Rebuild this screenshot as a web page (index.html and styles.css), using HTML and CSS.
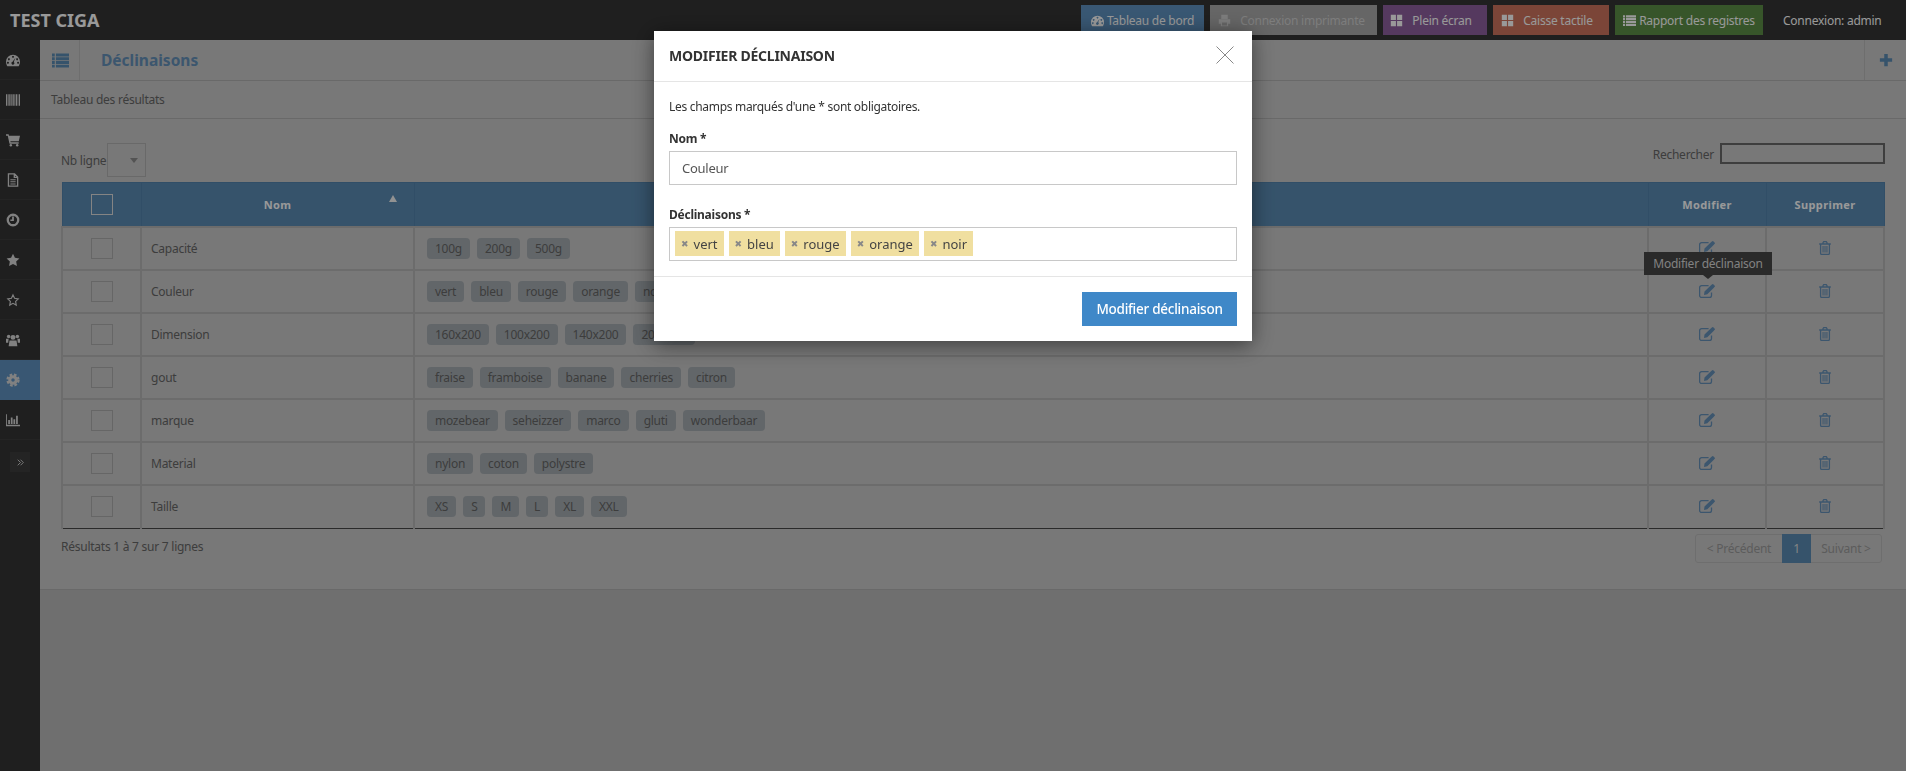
FILE: index.html
```html
<!DOCTYPE html>
<html>
  <head>
    <meta http-equiv="Content-type" content="text/html; charset=utf-8">
    <title>Déclinaisons</title>
    <link rel="stylesheet" href="styles.css">
  </head>
  <body>
    <svg class="defs" width="0" height="0">
      <symbol id="i-dash" viewBox="0 0 16 16"><path fill-rule="evenodd" d="M0 10a8 8 0 0 1 16 0c0 2-.6 3.500-1.500 5h-13C.6 13.500 0 12 0 10zM3.300 6a1.100 1.100 0 1 0 .01 0zM8 3.300a1.100 1.100 0 1 0 .01 0zM12.700 6a1.100 1.100 0 1 0 .01 0zM2.200 10a1.100 1.100 0 1 0 .01 0zM13.800 10a1.100 1.100 0 1 0 .01 0zM10.800 5.500L8.900 10.300a1.700 1.700 0 1 1-1.400-.3z"/></symbol>
      <symbol id="i-barcode" viewBox="0 0 16 16"><path d="M0 1.500h1.500v13H0zM2.200 1.500h.8v13h-.8zM3.700 1.500h1.500v13H3.700zM5.900 1.500h.8v13h-.8zM7.400 1.500h1.500v13H7.400zM9.600 1.500h.8v13h-.8zM11.100 1.500h1.500v13h-1.500zM13.300 1.500h.8v13h-.8zM14.800 1.500H16v13h-1.200z"/></symbol>
      <symbol id="i-cart" viewBox="0 0 16 16"><path d="M0 1.500h3l.4 1.500H16l-1.400 6.500H5l.3 1.200h9.200v1.500H4L2 3H0z"/><circle cx="5.500" cy="14" r="1.400"/><circle cx="12.800" cy="14" r="1.400"/></symbol>
      <symbol id="i-file" viewBox="0 0 16 16"><path fill="none" stroke="currentColor" stroke-width="1.500" d="M2.800 1h7l3.500 3.500V15H2.800zM9.500 1v4h4"/><path d="M5 7h6v1.200H5zM5 9.500h6v1.200H5zM5 12h6v1.200H5z"/></symbol>
      <symbol id="i-clock" viewBox="0 0 16 16"><circle cx="8" cy="8" r="6" fill="none" stroke="currentColor" stroke-width="2.600"/><path d="M7 4h2v5H5V7.500h2z"/></symbol>
      <symbol id="i-star" viewBox="0 0 16 16"><path d="M8 .8l2.200 4.700 5.100.7-3.700 3.600.9 5.100L8 12.500l-4.500 2.400.9-5.100L.7 6.200l5.100-.7z"/></symbol>
      <symbol id="i-star-o" viewBox="0 0 16 16"><path fill="none" stroke="currentColor" stroke-width="1.300" d="M8 2.200l1.800 3.900 4.200.6-3 2.900.7 4.200L8 11.800l-3.700 2 .7-4.200-3-2.900 4.200-.6z"/></symbol>
      <symbol id="i-users" viewBox="0 0 16 16"><circle cx="8" cy="5" r="2.800"/><circle cx="3" cy="4" r="2"/><circle cx="13" cy="4" r="2"/><path d="M4 8.500h8l1 6.500H3zM0 6.500h3L2.500 11H0zM13 6.500h3V11h-2.500z"/></symbol>
      <symbol id="i-cog" viewBox="0 0 16 16"><circle cx="8" cy="8" r="6.300" fill="none" stroke="currentColor" stroke-width="2.600" stroke-dasharray="3 2"/><path fill-rule="evenodd" d="M8 2.500a5.500 5.500 0 1 1 0 11 5.500 5.500 0 0 1 0-11zM8 6a2 2 0 1 0 0 4 2 2 0 0 0 0-4z"/></symbol>
      <symbol id="i-chart" viewBox="0 0 16 16"><path d="M0 1.500h1v12h15V15H0zM2.500 8h2v4.500h-2zM5.500 5h2v7.500h-2zM8.500 7h2v5.500h-2zM11.500 3h2v9.500h-2z"/></symbol>
      <symbol id="i-angles" viewBox="0 0 16 16"><path fill="none" stroke="currentColor" stroke-width="1.600" d="M3 3l5 5-5 5M8 3l5 5-5 5"/></symbol>
      <symbol id="i-list" viewBox="0 0 16 16"><path d="M0 1.500h2.600v2.700H0zM3.700 1.500H16v2.700H3.700zM0 5h2.600v2.700H0zM3.700 5H16v2.700H3.700zM0 8.500h2.600v2.700H0zM3.700 8.500H16v2.700H3.700zM0 12h2.600v2.700H0zM3.700 12H16v2.700H3.700z"/></symbol>
      <symbol id="i-large" viewBox="0 0 16 16"><path d="M1 1h6.300v6.300H1zM8.700 1H15v6.300H8.700zM1 8.700h6.300V15H1zM8.700 8.700H15V15H8.700z"/></symbol>
      <symbol id="i-print" viewBox="0 0 16 16"><path fill-rule="evenodd" d="M4 1h8v5H4zM1 6.500h14V12h-2.500v3h-9v-3H1zM5 10.500V14h6v-3.500z"/></symbol>
      <symbol id="i-plus" viewBox="0 0 16 16"><path d="M6 1h4v5h5v4h-5v5H6v-5H1V6h5z"/></symbol>
      <symbol id="i-edit" viewBox="0 0 16 14"><path fill="none" stroke="currentColor" stroke-width="1.300" d="M12.500 8.500v3a2 2 0 0 1-2 2H2.600a2 2 0 0 1-2-2V3.700a2 2 0 0 1 2-2h7"/><path d="M5.500 7.500L12.500.8l2.600 2.600-6.800 6.900-3.300.6zM13.200.2l.8-.2 2 2-.2.800-.9.800-2.500-2.600z"/></symbol>
      <symbol id="i-trash" viewBox="0 0 12 14"><path fill="none" stroke="currentColor" stroke-width="1.300" d="M.2 3h11.600M4 3V1.700L4.700.7h2.600l.7 1V3M1.600 3v9.300c0 .7.500 1.200 1.100 1.200h6.600c.6 0 1.100-.5 1.100-1.200V3"/><path d="M3.500 5h1.100v6.500H3.500zM5.450 5h1.100v6.500H5.450zM7.400 5h1.100v6.500H7.400z"/></symbol>
    </svg>

    <div class="topbar">
      <div class="brand">TEST CIGA</div>
      <div class="top_btns">
        <a class="top_btn btn_blue"><svg class="ico"><use href="#i-dash"/></svg>Tableau de bord</a>
        <a class="top_btn btn_grey"><svg class="ico"><use href="#i-print"/></svg>Connexion imprimante</a>
        <a class="top_btn btn_purple"><svg class="ico"><use href="#i-large"/></svg>Plein écran</a>
        <a class="top_btn btn_red"><svg class="ico"><use href="#i-large"/></svg>Caisse tactile</a>
        <a class="top_btn btn_green"><svg class="ico"><use href="#i-list"/></svg>Rapport des registres</a>
        <span class="login">Connexion: admin</span>
      </div>
    </div>

    <div class="layout">
      <div class="sidebar">
        <a class="side_item"><svg class="ico"><use href="#i-dash"/></svg></a>
        <a class="side_item"><svg class="ico"><use href="#i-barcode"/></svg></a>
        <a class="side_item"><svg class="ico"><use href="#i-cart"/></svg></a>
        <a class="side_item"><svg class="ico"><use href="#i-file"/></svg></a>
        <a class="side_item"><svg class="ico"><use href="#i-clock"/></svg></a>
        <a class="side_item"><svg class="ico"><use href="#i-star"/></svg></a>
        <a class="side_item"><svg class="ico"><use href="#i-star-o"/></svg></a>
        <a class="side_item"><svg class="ico"><use href="#i-users"/></svg></a>
        <a class="side_item active"><svg class="ico"><use href="#i-cog"/></svg></a>
        <a class="side_item"><svg class="ico"><use href="#i-chart"/></svg></a>
        <a class="side_toggle"><svg class="ico_small"><use href="#i-angles"/></svg></a>
      </div>

      <div class="main">
        <div class="page_head">
          <div class="head_icon"><svg class="ico_list"><use href="#i-list"/></svg></div>
          <h1 class="page_title">Déclinaisons</h1>
          <div class="head_add"><svg class="ico_plus"><use href="#i-plus"/></svg></div>
        </div>
        <div class="sub_head">Tableau des résultats</div>

        <div class="panel">
          <div class="controls">
            <div class="nb_line">Nb ligne <span class="fake_select"><i class="caret"></i></span></div>
            <div class="search">Rechercher <span class="search_box"></span></div>
          </div>

          <table class="grid">
            <colgroup>
              <col class="c_check"><col class="c_name"><col class="c_vals"><col class="c_edit"><col class="c_del">
            </colgroup>
            <thead>
              <tr>
                <th><span class="check"></span></th>
                <th class="sorted">Nom<i class="sort_up"></i></th>
                <th></th>
                <th>Modifier</th>
                <th>Supprimer</th>
              </tr>
            </thead>
            <tbody>
              <tr>
                <td class="mid"><span class="check"></span></td>
                <td>Capacité</td>
                <td><div class="chips"><span class="chip">100g</span><span class="chip">200g</span><span class="chip">500g</span></div></td>
                <td class="mid"><svg class="ico_edit"><use href="#i-edit"/></svg></td>
                <td class="mid"><svg class="ico_trash"><use href="#i-trash"/></svg></td>
              </tr>
              <tr>
                <td class="mid"><span class="check"></span></td>
                <td>Couleur</td>
                <td><div class="chips"><span class="chip">vert</span><span class="chip">bleu</span><span class="chip">rouge</span><span class="chip">orange</span><span class="chip">noir</span></div></td>
                <td class="mid tip_cell"><svg class="ico_edit"><use href="#i-edit"/></svg><div class="tooltip">Modifier déclinaison</div></td>
                <td class="mid"><svg class="ico_trash"><use href="#i-trash"/></svg></td>
              </tr>
              <tr>
                <td class="mid"><span class="check"></span></td>
                <td>Dimension</td>
                <td><div class="chips"><span class="chip">160x200</span><span class="chip">100x200</span><span class="chip">140x200</span><span class="chip">200x200</span></div></td>
                <td class="mid"><svg class="ico_edit"><use href="#i-edit"/></svg></td>
                <td class="mid"><svg class="ico_trash"><use href="#i-trash"/></svg></td>
              </tr>
              <tr>
                <td class="mid"><span class="check"></span></td>
                <td>gout</td>
                <td><div class="chips"><span class="chip">fraise</span><span class="chip">framboise</span><span class="chip">banane</span><span class="chip">cherries</span><span class="chip">citron</span></div></td>
                <td class="mid"><svg class="ico_edit"><use href="#i-edit"/></svg></td>
                <td class="mid"><svg class="ico_trash"><use href="#i-trash"/></svg></td>
              </tr>
              <tr>
                <td class="mid"><span class="check"></span></td>
                <td>marque</td>
                <td><div class="chips"><span class="chip">mozebear</span><span class="chip">seheizzer</span><span class="chip">marco</span><span class="chip">gluti</span><span class="chip">wonderbaar</span></div></td>
                <td class="mid"><svg class="ico_edit"><use href="#i-edit"/></svg></td>
                <td class="mid"><svg class="ico_trash"><use href="#i-trash"/></svg></td>
              </tr>
              <tr>
                <td class="mid"><span class="check"></span></td>
                <td>Material</td>
                <td><div class="chips"><span class="chip">nylon</span><span class="chip">coton</span><span class="chip">polystre</span></div></td>
                <td class="mid"><svg class="ico_edit"><use href="#i-edit"/></svg></td>
                <td class="mid"><svg class="ico_trash"><use href="#i-trash"/></svg></td>
              </tr>
              <tr>
                <td class="mid"><span class="check"></span></td>
                <td>Taille</td>
                <td><div class="chips"><span class="chip">XS</span><span class="chip">S</span><span class="chip">M</span><span class="chip">L</span><span class="chip">XL</span><span class="chip">XXL</span></div></td>
                <td class="mid"><svg class="ico_edit"><use href="#i-edit"/></svg></td>
                <td class="mid"><svg class="ico_trash"><use href="#i-trash"/></svg></td>
              </tr>
            </tbody>
          </table>

          <div class="table_foot">
            <div class="result_info">Résultats 1 à 7 sur 7 lignes</div>
            <div class="pager">
              <a class="pager_prev">&lt; Précédent</a>
              <a class="pager_num">1</a>
              <a class="pager_next">Suivant &gt;</a>
            </div>
          </div>
        </div>
      </div>
    </div>

    <div class="backdrop"></div>

    <div class="modal">
      <div class="modal_head">
        <h2 class="modal_title">Modifier déclinaison</h2>
        <svg class="modal_close" viewBox="0 0 18 18"><path d="M.5.5l17 17M17.500.5l-17 17"/></svg>
      </div>
      <div class="modal_body">
        <p class="modal_note">Les champs marqués d'une * sont obligatoires.</p>
        <label class="field_label">Nom *</label>
        <div class="field_input">Couleur</div>
        <label class="field_label field_second">Déclinaisons *</label>
        <div class="field_tags">
          <span class="tag"><b>✖</b>vert</span>
          <span class="tag"><b>✖</b>bleu</span>
          <span class="tag"><b>✖</b>rouge</span>
          <span class="tag"><b>✖</b>orange</span>
          <span class="tag"><b>✖</b>noir</span>
        </div>
      </div>
      <div class="modal_foot">
        <a class="modal_btn">Modifier déclinaison</a>
      </div>
    </div>
  </body>
</html>
```

FILE: styles.css
```css
html, body { height: 100%; margin: 0; }
body { background: #b9b9b9; color: #666; font: 12px "Noto Sans", "Open Sans", sans-serif; letter-spacing: -.25px; overflow: hidden; }
.defs { position: absolute; }
svg { fill: currentColor; }

/* top bar */
.topbar { display: flex; justify-content: space-between; align-items: center; height: 40px; padding-left: 10px; background: #343434; color: #fff; }
.brand { font-size: 18px; font-weight: 700; letter-spacing: 0; }
.top_btns { display: flex; align-items: center; gap: 6px; }
.top_btn { display: flex; justify-content: center; align-items: center; gap: 3px; height: 30px; color: #fff; font-size: 12px; }
.top_btn .ico { width: 13px; height: 13px; }
.btn_blue { width: 123px; background: #5f92c0; }
.btn_grey { width: 167px; padding-right: 4px; box-sizing: border-box; background: #aaa; color: #d0d0d0; }
.btn_grey .ico { margin-right: 6px; }
.btn_purple { width: 104px; padding-right: 8px; box-sizing: border-box; background: #8e5f9e; }
.btn_purple .ico, .btn_red .ico { margin-right: 6px; }
.btn_red { width: 116px; padding-right: 8px; box-sizing: border-box; background: #cd745e; }
.btn_green { width: 148px; background: #5c8e46; }
.login { width: 137px; padding-left: 14px; box-sizing: border-box; color: #fff; white-space: nowrap; }

/* left menu */
.layout { display: flex; height: calc(100% - 40px); }
.sidebar { flex: 0 0 40px; background: #343434; color: #d8d8d8; }
.side_item { display: flex; align-items: center; height: 39px; padding-left: 6px; border-bottom: 1px solid #3c3c3c; }
.side_item.active { background: #5f92c0; border-bottom-color: #5f92c0; }
.side_item .ico { width: 14px; height: 14px; }
.side_toggle { display: flex; justify-content: center; align-items: center; width: 20px; height: 20px; margin: 12px 0 0 10px; background: #3c3c3c; }
.ico_small { width: 9px; height: 9px; }

/* content */
.main { flex: 1; min-width: 0; }
.page_head { display: flex; align-items: center; box-sizing: border-box; height: 41px; border-bottom: 1px solid #b0b0b0; background: #c8c8c8; }
.head_icon { display: flex; align-items: center; width: 40px; height: 100%; padding-left: 12px; box-sizing: border-box; border-right: 1px solid #b8b8b8; color: #5a8bb3; }
.ico_list { width: 17px; height: 17px; }
.page_title { flex: 1; margin: 0 0 0 21px; color: #6490b8; font-size: 15.5px; font-weight: 700; letter-spacing: 0; }
.head_add { display: flex; justify-content: center; align-items: center; width: 41px; height: 100%; border-left: 1px solid #b8b8b8; color: #5a8bb3; }
.ico_plus { width: 14px; height: 14px; }
.sub_head { height: 38px; padding-left: 11px; line-height: 37px; box-sizing: border-box; background: #c8c8c8; border-bottom: 1px solid #b0b0b0; }

.panel { padding: 24px 21px 26px 21px; background: #c8c8c8; border-bottom: 1px solid #b0b0b0; }
.controls { display: flex; justify-content: space-between; height: 34px; margin-bottom: 5px; }
.nb_line { display: flex; align-items: center; gap: 1px; }
.fake_select { display: flex; justify-content: flex-end; align-items: center; width: 39px; height: 34px; padding-right: 7px; box-sizing: border-box; border: 1px solid #b0b0b0; }
.caret { border: 4px solid transparent; border-top: 5px solid #8a8a8a; border-bottom: 0; }
.search { display: flex; align-items: flex-start; gap: 6px; line-height: 23px; }
.search_box { width: 165px; height: 21px; box-sizing: border-box; border: 2px solid #686868; }

/* table */
.grid { width: 100%; table-layout: fixed; border-collapse: collapse; border-bottom: 1px solid #464646; }
.c_check { width: 79px; }
.c_name { width: 273px; }
.c_edit { width: 118px; }
.c_del { width: 118px; }
.grid th { height: 43px; padding: 0; background: #5a8bb3; border: 1px solid #5283ac; color: #fff; font-size: 11px; letter-spacing: .4px; }
.grid th.sorted { position: relative; }
.sort_up { position: absolute; top: 12px; right: 17px; border: 4px solid transparent; border-bottom: 7px solid #f4f4f4; border-top: 0; }
.grid td { height: 43px; padding: 0 9px; box-sizing: border-box; border: 2px solid #b4b4b4; }
.grid tr:last-child td { border-bottom: 0; }
.grid td.mid, .grid th:first-child { padding: 0; text-align: center; }
.check { display: inline-block; width: 22px; height: 21px; box-sizing: border-box; border: 1px solid #aaa; vertical-align: middle; }
th .check { border-color: #ddd; }
.chips { display: flex; gap: 7px; padding-left: 3px; }
.chip { padding: 0 8px; height: 21px; line-height: 21px; border-radius: 4px; background: #a4abb0; }
.ico_edit { display: block; width: 16px; height: 14px; margin: -2px auto 0; color: #6490b8; }
.ico_trash { display: block; width: 12px; height: 14px; margin: -2px auto 0; color: #6490b8; }

.tip_cell { position: relative; }
.tooltip { position: absolute; top: -19px; left: -5px; width: 128px; height: 23px; line-height: 23px; background: #464646; color: #d8d8d8; text-align: center; font-size: 12px; }
.tooltip:after { content: ""; position: absolute; top: 23px; left: 59px; border: 5px solid transparent; border-top: 4px solid #464646; border-bottom: 0; }

.table_foot { display: flex; justify-content: space-between; padding: 5px 3px 0 0; }
.result_info { line-height: 26px; }
.pager { display: flex; height: 29px; box-sizing: border-box; border: 1px solid #b8b8b8; border-radius: 3px; line-height: 27px; color: #9a9a9a; }
.pager_prev { width: 86px; text-align: center; }
.pager_num { width: 29px; background: #5a8bb3; color: #ddd; text-align: center; margin: -1px 0; line-height: 29px; }
.pager_next { width: 70px; text-align: center; }

/* overlay */
.backdrop { position: fixed; top: 0; right: 0; bottom: 0; left: 0; background: rgba(0, 0, 0, .4); }
.modal { position: fixed; top: 31px; left: 0; right: 0; width: 598px; height: 310px; margin: auto; background: #fff; color: #333; box-shadow: 0 4px 20px rgba(0, 0, 0, .5); }
.modal_head { display: flex; justify-content: space-between; align-items: center; height: 51px; padding: 0 18px 2px 15px; box-sizing: border-box; border-bottom: 1px solid #e5e5e5; }
.modal_title { margin: 0; font-size: 14px; font-weight: 700; text-transform: uppercase; }
.modal_close { width: 18px; height: 18px; fill: none; stroke: #888; stroke-width: 1; }
.modal_body { height: 195px; padding: 0 15px; box-sizing: border-box; border-bottom: 1px solid #e5e5e5; }
.modal_note { margin: 0; padding-top: 17px; height: 48px; box-sizing: border-box; font-size: 12px; line-height: 16px; letter-spacing: -.3px; }
.field_label { display: block; height: 21px; font-weight: 700; font-size: 12px; line-height: 18px; }
.field_second { margin-top: 21px; }
.field_input { height: 34px; padding-left: 12px; box-sizing: border-box; border: 1px solid #c8c8c8; line-height: 32px; font-size: 13px; color: #555; }
.field_tags { display: flex; gap: 5px; height: 34px; padding: 3px 5px; box-sizing: border-box; border: 1px solid #c8c8c8; }
.tag { display: flex; align-items: center; height: 25px; padding: 0 6px; background: #f0dfa0; color: #444; font-size: 13px; letter-spacing: 0; }
.tag b { margin-right: 5px; color: #888; font-size: 9px; font-weight: 400; font-family: "DejaVu Sans", sans-serif; }
.modal_foot { display: flex; justify-content: flex-end; padding: 15px 15px 0; }
.modal_btn { width: 155px; height: 34px; background: #3f88c8; color: #fff; font-size: 13.5px; line-height: 34px; text-align: center; font-weight: 500; }
```
